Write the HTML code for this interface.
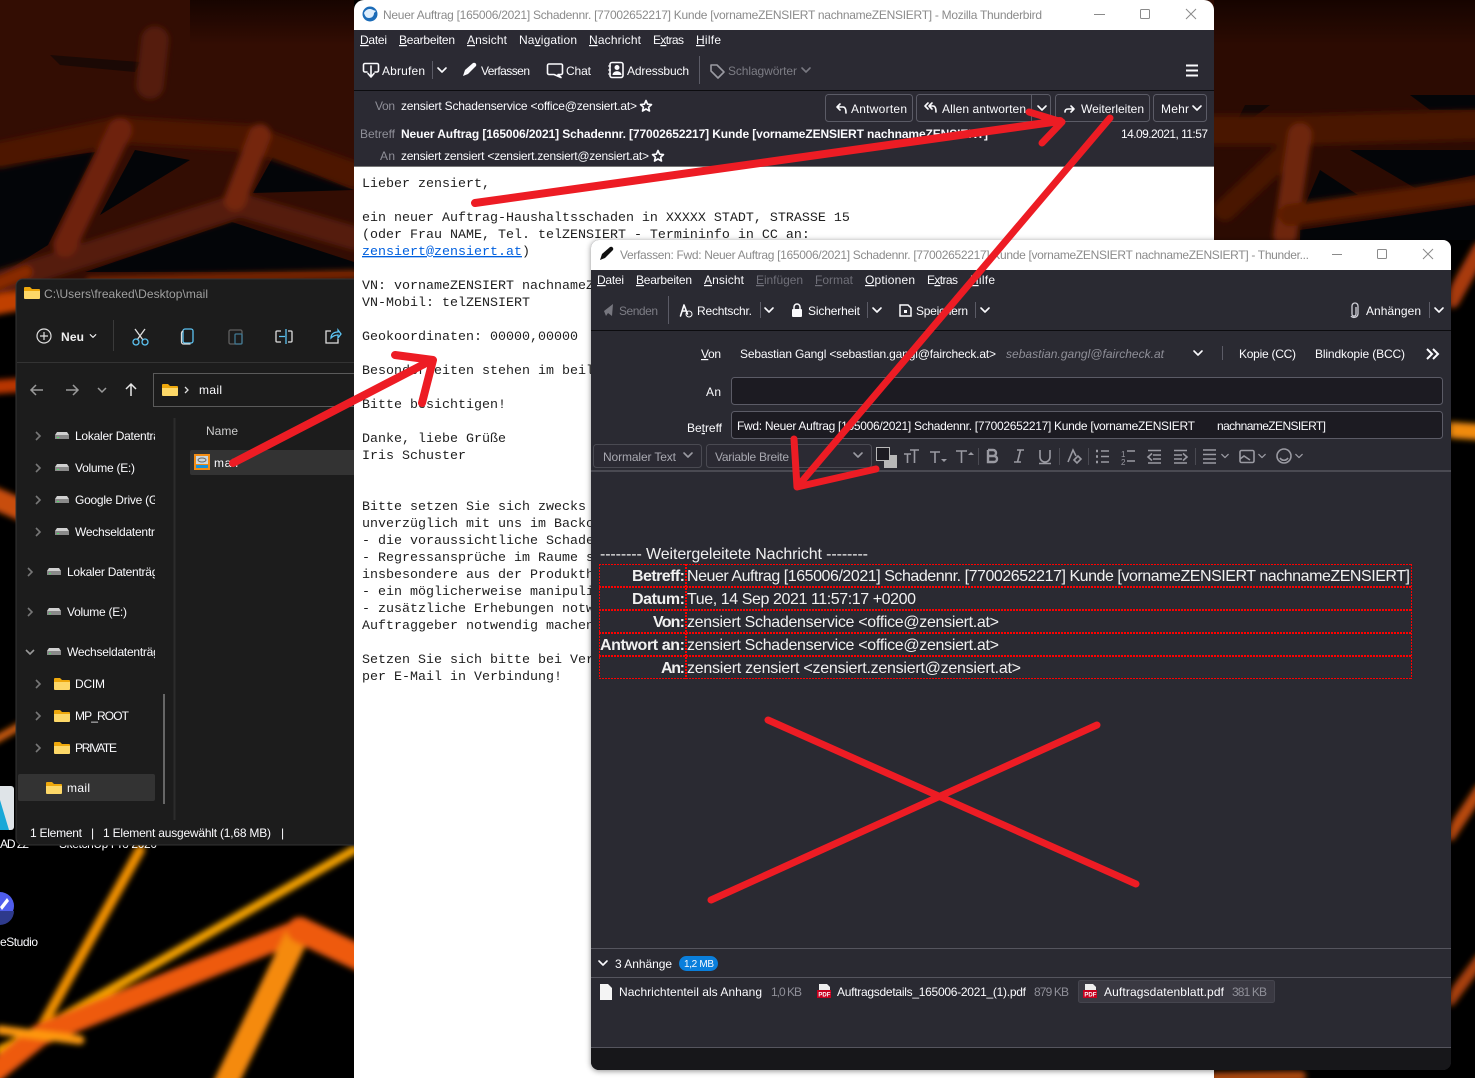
<!DOCTYPE html>
<html lang="de"><head><meta charset="utf-8"><title>Thunderbird</title>
<style>
html,body{margin:0;padding:0;background:#000;width:1475px;height:1078px;overflow:hidden}
svg{display:block}
text{font-family:"Liberation Sans",sans-serif;font-size:12px;fill:#fbfbfe;white-space:pre}
.d{fill:#8f8f98}.t{fill:#8b8b8b}.g{fill:#b0b0b8}
.m{font-family:"Liberation Mono",monospace;font-size:13.33px;fill:#1e1e1e}
.b{font-size:16px}.bb{font-size:16px;font-weight:bold}
.e{fill:#f0f0f0}
.u{text-decoration:underline}
.n{letter-spacing:-.25px}
.s{fill:none;stroke:#fbfbfe;stroke-width:1.6;stroke-linecap:round;stroke-linejoin:round}
.w{fill:none;stroke:#ed1c24;stroke-width:7;stroke-linecap:round;stroke-linejoin:round}
.r{fill:none;stroke:#ff0000;stroke-width:1;stroke-dasharray:2 1}
.q{fill:none;stroke:#9a9aa2;stroke-width:1.6;stroke-linecap:round;stroke-linejoin:round}
.bt{fill:#2b2a33;stroke:#5b5b66;stroke-width:1}
.sp{stroke:#5b5b66;stroke-width:1}
</style></head><body>
<svg xmlns="http://www.w3.org/2000/svg" width="1475" height="1078" viewBox="0 0 1475 1078">
<defs>
<filter id="bl" x="-20%" y="-20%" width="140%" height="140%"><feGaussianBlur stdDeviation="3"/></filter>
<filter id="sh" x="-5%" y="-5%" width="110%" height="110%"><feDropShadow dx="0" dy="1" stdDeviation="3" flood-color="#000" flood-opacity=".45"/></filter>
<linearGradient id="tp" x1="0" y1="0" x2="0" y2="1"><stop offset="0" stop-color="#120300" stop-opacity=".85"/><stop offset="1" stop-color="#120300" stop-opacity="0"/></linearGradient>
<clipPath id="side"><rect x="0" y="410" width="155" height="410"/></clipPath>
<path id="ch" class="s" d="M-4 -2L0 2L4 -2"/>
<path id="cq" class="q" d="M-4 -2L0 2L4 -2"/>
<path id="cr" fill="none" stroke="#777" stroke-width="1.6" d="M-2 -4L2 0L-2 4"/>
<g id="dr"><path d="M2 3H12L14 6V10H0V6Z" fill="#d0d0d0"/><rect y="6" width="14" height="4" fill="#8a8a8a"/><rect x="2" y="8" width="2" height="1" fill="#4cd964"/></g>
<g id="fo"><path d="M0 2a1 1 0 0 1 1-1h5l2 2h7a1 1 0 0 1 1 1v2H0Z" fill="#eea80c"/><path d="M0 5h16v7a1 1 0 0 1-1 1H1a1 1 0 0 1-1-1Z" fill="#fdd868"/></g>
<g id="pdf"><path d="M2 0H10L13 3V14H2Z" fill="#eee"/><rect x="0" y="6" width="14" height="8" fill="#c8001e"/><text x="1.4" y="12.5" style="font-size:6px;font-weight:bold">PDF</text></g>
</defs>

<!-- wallpaper -->
<rect width="1475" height="1078" fill="#000"/>
<rect width="354" height="285" fill="#330d03"/>
<rect x="1200" width="275" height="240" fill="#2c0b02"/>
<g fill="#030508">
<path d="M0 165L95 152L48 245L0 275Z"/>
<path d="M135 150L190 160L100 215Z"/>
<path d="M273 157L354 190L253 193Z"/>
<path d="M232 222L354 262V272H85Z"/>
<path d="M50 55L140 62L135 72L60 65Z" opacity=".5"/>
<path d="M1410 95H1475V110H1430Z"/><path d="M1350 150H1475V175L1415 188Z"/>
<path d="M1320 170L1358 195L1305 205Z"/><path d="M1300 230L1475 205V240H1300Z"/>
<path d="M1245 105L1270 105L1230 135Z" opacity=".6"/>
</g>
<g filter="url(#bl)" fill="none" stroke-linecap="round" stroke-linejoin="round">
<path d="M0 155L120 130L250 138L354 175" stroke="#4d1606" stroke-width="26"/>
<path d="M0 282L240 205L354 238" stroke="#551a07" stroke-width="24"/>
<path d="M155 40L150 85" stroke="#541a07" stroke-width="28"/>
<path d="M120 130L65 245" stroke="#6e2308" stroke-width="24"/>
<path d="M260 135L235 200" stroke="#742608" stroke-width="22"/>
<path d="M90 281L354 274" stroke="#7a2806" stroke-width="8"/>
<path d="M1215 130L1300 130L1475 125" stroke="#4a1705" stroke-width="30"/>
<path d="M1225 210L1300 140" stroke="#4a1705" stroke-width="22"/>
<path d="M1300 135L1285 235" stroke="#6e2508" stroke-width="24"/>
<path d="M1290 215L1475 190" stroke="#5a1c06" stroke-width="22"/>
<path d="M-6 285L26 272" stroke="#8a2c06" stroke-width="12"/>
<path d="M-6 305L22 300" stroke="#c04006" stroke-width="20"/>
<path d="M-6 387L22 385" stroke="#b83406" stroke-width="14"/>
<path d="M-6 498L22 510" stroke="#c84e08" stroke-width="22"/>
<path d="M-5 740L20 726" stroke="#c85a08" stroke-width="8"/>
<path d="M140 850L40 1030" stroke="#f09000" stroke-width="10"/>
<path d="M354 850L40 1030L0 1050" stroke="#f3a000" stroke-width="9"/>
<path d="M300 930L40 1035L-10 1075" stroke="#ee5a0a" stroke-width="22"/>
<path d="M300 930L225 1085" stroke="#f58a0a" stroke-width="24"/>
<path d="M300 930L360 958" stroke="#ee5a0a" stroke-width="26"/>
<path d="M0 1030L80 1040" stroke="#ff9a10" stroke-width="9"/>
<path d="M1480 250L1452 300" stroke="#a83a08" stroke-width="16"/>
<path d="M1450 430L1480 432" stroke="#f08a10" stroke-width="16"/>
<path d="M1480 790L1450 835" stroke="#b8480a" stroke-width="12"/>
<path d="M1450 1000L1480 960" stroke="#a84008" stroke-width="12"/>
<path d="M1215 1078L1300 1076" stroke="#a84608" stroke-width="12"/>
</g>
<rect x="190" width="164" height="45" fill="url(#tp)"/>
<rect x="1214" width="261" height="45" fill="url(#tp)"/>

<!-- desktop icons -->
<rect x="-4" y="786" width="18" height="44" rx="3" fill="#dfe4e8"/><path d="M0 830V800L9 830Z" fill="#18a8d8"/>
<text x="0" y="848" textLength="29">AD 22</text><text x="59" y="848" textLength="98">SketchUp Pro 2020</text>
<circle cx="0" cy="906" r="14" fill="#4f5dec"/><path d="M-14 911H14A14 14 0 0 1 -14 911Z" fill="#2e3a8c"/><path d="M0 907L7 898L9 901L2 910Z" fill="#fff"/>
<text x="0" y="946" textLength="38">eStudio</text>

<!-- explorer -->
<rect x="16" y="279" width="350" height="566" rx="7" fill="#1c1c1c" stroke="#333" stroke-width="1"/>
<use href="#fo" x="24" y="286"/>
<text x="44" y="298" textLength="164" fill="#a0a0a0" style="fill:#a0a0a0">C:\Users\freaked\Desktop\mail</text>
<circle cx="44" cy="336" r="7" fill="none" stroke="#ddd" stroke-width="1.2"/><path d="M44 332V340M40 336H48" stroke="#ddd" stroke-width="1.2"/>
<text x="61" y="341" textLength="23" style="font-weight:bold;fill:#eee">Neu</text>
<use href="#ch" transform="translate(93 336) scale(.7)"/>
<path d="M113.500 320V351" stroke="#3a3a3a"/>
<g fill="none" stroke="#5cc3f2" stroke-width="1.3">
<path d="M135 329L143 340M145 329L137 340" stroke="#ddd"/><circle cx="136" cy="342" r="3"/><circle cx="145" cy="342" r="3"/>
<rect x="183" y="329" width="10" height="14" rx="2"/><path d="M183 331a3 3 0 0 0-1.500 2V342a2 2 0 0 0 2 2h7" stroke="#ddd"/>
<g opacity=".55"><rect x="229" y="330" width="13" height="14" rx="1.500" stroke="#999"/><rect x="235" y="334" width="7" height="10" rx="1"/></g>
<path d="M281 331h-4a1 1 0 0 0-1 1v9a1 1 0 0 0 1 1h4M288 331h3a1 1 0 0 1 1 1v9a1 1 0 0 1-1 1h-3" stroke="#ddd"/><path d="M286 329V344M279 336.500H285"/>
<path d="M331 331h-5v12h12v-4" stroke="#ddd"/><path d="M331 338c0-4 3-6 7-6v-2l3 4-3 4v-3c-3 0-5 1-7 3Z"/>
</g>
<path d="M17 362.500H354" stroke="#333"/>
<g fill="none" stroke="#9a9a9a" stroke-width="1.500"><path d="M43 390H31M36 385L31 390L36 395"/><path d="M66 390H78M73 385L78 390L73 395"/><path d="M98 388L102 392L106 388"/><path d="M131 396V384M126 389L131 384L136 389" stroke="#e8e8e8"/></g>
<rect x="153.500" y="373.500" width="210" height="33" fill="#1c1c1c" stroke="#5a5a5a"/>
<use href="#fo" x="162" y="383"/><path d="M185 387L188 390L185 393" fill="none" stroke="#ddd" stroke-width="1.300"/>
<text x="199" y="394" textLength="23">mail</text>
<path d="M174.500 418V820" stroke="#2c2c2c" stroke-width="2"/>
<text x="206" y="435" textLength="32" style="fill:#ccc">Name</text>
<rect x="190" y="450" width="170" height="25" rx="2" fill="#333"/>
<rect x="194" y="454" width="16" height="16" fill="#f28c14"/><rect x="196" y="456" width="12" height="8" fill="#ccd6dc"/><rect x="196" y="465" width="12" height="3" fill="#1592dc"/><ellipse cx="202" cy="460" rx="4" ry="2" fill="none" stroke="#666"/>
<text x="214" y="467" textLength="24">mail</text>
<g clip-path="url(#side)">
<use href="#cr" x="38" y="436"/><use href="#dr" x="55" y="429"/><text class="n" x="75" y="440">Lokaler Datenträger</text>
<use href="#cr" x="38" y="468"/><use href="#dr" x="55" y="461"/><text x="75" y="472" textLength="60">Volume (E:)</text>
<use href="#cr" x="38" y="500"/><use href="#dr" x="55" y="493"/><text class="n" x="75" y="504">Google Drive (G:)</text>
<use href="#cr" x="38" y="532"/><use href="#dr" x="55" y="525"/><text class="n" x="75" y="536">Wechseldatenträger</text>
<use href="#cr" x="30" y="572"/><use href="#dr" x="47" y="565"/><text class="n" x="67" y="576">Lokaler Datenträger</text>
<use href="#cr" x="30" y="612"/><use href="#dr" x="47" y="605"/><text x="67" y="616" textLength="60">Volume (E:)</text>
<path d="M26 650L30 654L34 650" fill="none" stroke="#999" stroke-width="1.600"/><use href="#dr" x="47" y="645"/><text class="n" x="67" y="656">Wechseldatenträger</text>
<use href="#cr" x="38" y="684"/><use href="#fo" x="54" y="677"/><text x="75" y="688" textLength="30">DCIM</text>
<use href="#cr" x="38" y="716"/><use href="#fo" x="54" y="709"/><text x="75" y="720" textLength="54">MP_ROOT</text>
<use href="#cr" x="38" y="748"/><use href="#fo" x="54" y="741"/><text x="75" y="752" textLength="42">PRIVATE</text>
<rect x="18" y="774" width="137" height="27" rx="2" fill="#333"/>
<use href="#fo" x="46" y="781"/><text x="67" y="792" textLength="23">mail</text>
</g>
<rect x="163" y="694" width="2" height="110" fill="#666"/>
<text x="30" y="837" textLength="52">1 Element</text><text x="91" y="837">|</text><text x="103" y="837" textLength="168">1 Element ausgewählt (1,68 MB)</text><text x="281" y="837">|</text>

<!-- thunderbird main -->
<path d="M354 10a10 10 0 0 1 10-10H1204a10 10 0 0 1 10 10V1078H354Z" fill="#fff"/>
<circle cx="370" cy="14" r="7.500" fill="#1c6cb8"/><path d="M364 13c2-4 6-5 9-3l3 1-2 2c0 3-2 5-5 5-3 0-4-2-5-5Z" fill="#dfeefc"/>
<text class="t" x="383" y="19" textLength="659">Neuer Auftrag [165006/2021] Schadennr. [77002652217] Kunde [vornameZENSIERT nachnameZENSIERT] - Mozilla Thunderbird</text>
<path d="M1094 14.500H1105" stroke="#8a8a8a"/><rect x="1140.500" y="9.500" width="9" height="9" rx="1" fill="none" stroke="#8a8a8a"/><path d="M1186 9L1196 19M1196 9L1186 19" stroke="#8a8a8a"/>
<rect x="354" y="30" width="860" height="136" fill="#2b2a33"/>
<rect x="354" y="166" width="860" height="1" fill="#777"/>
<path d="M354 90.500H1214" stroke="#0c0c0f"/>
<text x="360" y="44" textLength="27"><tspan class="u">D</tspan>atei</text>
<text x="399" y="44" textLength="56"><tspan class="u">B</tspan>earbeiten</text>
<text x="467" y="44" textLength="40"><tspan class="u">A</tspan>nsicht</text>
<text x="519" y="44" textLength="58">Na<tspan class="u">v</tspan>igation</text>
<text x="589" y="44" textLength="52"><tspan class="u">N</tspan>achricht</text>
<text x="653" y="44" textLength="31">E<tspan class="u">x</tspan>tras</text>
<text x="696" y="44" textLength="25"><tspan class="u">H</tspan>ilfe</text>
<!-- toolbar -->
<path class="s" d="M367 72H365a1.500 1.500 0 0 1-1.500-1.500V65a1.500 1.500 0 0 1 1.500-1.500H377a1.500 1.500 0 0 1 1.500 1.500v5.500A1.500 1.500 0 0 1 377 72H375M371 66V76M368 73.500L371 77L374 73.500"/>
<text x="382" y="75" textLength="43">Abrufen</text>
<path class="sp" d="M432.500 61V79"/><use href="#ch" x="442" y="70"/>
<path d="M463 76L465 70L473 63C475 62 477 64 476 66L468 74Z" fill="#fbfbfe"/>
<text x="481" y="75" textLength="49">Verfassen</text>
<path class="s" d="M549 64H561a1.500 1.500 0 0 1 1.500 1.500V73a1.500 1.500 0 0 1-1.500 1.500H558L561 77.500 554 74.500H549A1.500 1.500 0 0 1 547.500 73V65.500A1.500 1.500 0 0 1 549 64Z"/>
<text x="566" y="75" textLength="25">Chat</text>
<rect x="610" y="62.500" width="13" height="15" rx="2" fill="none" stroke="#fbfbfe" stroke-width="1.600"/><circle cx="617" cy="67.500" r="2.500" fill="#fbfbfe"/><path d="M612.500 75c0-5 9-5 9 0Z" fill="#fbfbfe"/><path d="M608 66H611M608 70H611M608 74H611" stroke="#fbfbfe"/>
<text x="627" y="75" textLength="62">Adressbuch</text>
<path class="sp" d="M699.500 56V84"/>
<path class="q" d="M711 65V71L718 78L724 72L717 65Z" stroke="#77777f"/>
<text class="d" x="728" y="75" textLength="69" style="fill:#7d7d85">Schlagwörter</text>
<use href="#cq" x="806" y="70" style="opacity:.7"/>
<path d="M1186 65.500H1198M1186 70.500H1198M1186 75.500H1198" stroke="#fbfbfe" stroke-width="2"/>
<!-- header rows -->
<text class="d" x="375" y="110" textLength="20">Von</text>
<text x="401" y="110" textLength="236">zensiert Schadenservice &lt;office@zensiert.at&gt;</text>
<path class="s" d="M646 100.500L647.600 104.200 651.500 104.600 648.600 107.200 649.500 111 646 109 642.500 111 643.400 107.200 640.500 104.600 644.400 104.200Z" stroke-width="1.300"/>
<text class="d" x="360" y="138" textLength="35">Betreff</text>
<text x="401" y="138" textLength="587" style="font-weight:bold">Neuer Auftrag [165006/2021] Schadennr. [77002652217] Kunde [vornameZENSIERT nachnameZENSIERT]</text>
<text class="d" x="380" y="160" textLength="15">An</text>
<text x="401" y="160" textLength="248">zensiert zensiert &lt;zensiert.zensiert@zensiert.at&gt;</text>
<path class="s" d="M658 150.500L659.600 154.200 663.500 154.600 660.600 157.200 661.500 161 658 159 654.500 161 655.400 157.200 652.500 154.600 656.400 154.200Z" stroke-width="1.300"/>
<text x="1121" y="138" textLength="87">14.09.2021, 11:57</text>
<rect class="bt" x="825.500" y="94.500" width="87" height="27" rx="3"/>
<rect class="bt" x="916.500" y="94.500" width="134" height="27" rx="3"/>
<path class="sp" d="M1031.500 95V121"/>
<rect class="bt" x="1055.500" y="94.500" width="94" height="27" rx="3"/>
<rect class="bt" x="1153.500" y="94.500" width="53" height="27" rx="3"/>
<path class="s" d="M840 104L837 107L840 110M837 107H843C845 107 846 109 846 113"/>
<text x="851" y="113" textLength="56">Antworten</text>
<path class="s" d="M928 103L925 106L928 109M932 103L929 106L932 109M929 106H933C935 106 936 108 936 112"/>
<text x="942" y="113" textLength="84">Allen antworten</text>
<use href="#ch" x="1042" y="108"/>
<path class="s" d="M1071 106L1074 109L1071 112M1074 109H1068C1066 109 1065 110 1065 112"/>
<text x="1081" y="113" textLength="63">Weiterleiten</text>
<text x="1161" y="113" textLength="28">Mehr</text>
<use href="#ch" x="1197" y="108"/>
<!-- message -->
<text class="m" x="362" y="187">Lieber zensiert,</text>
<text class="m" x="362" y="221">ein neuer Auftrag-Haushaltsschaden in XXXXX STADT, STRASSE 15</text>
<text class="m" x="362" y="238">(oder Frau NAME, Tel. telZENSIERT - Termininfo in CC an:</text>
<text class="m" x="362" y="255"><tspan class="u" style="fill:#0060df">zensiert@zensiert.at</tspan>)</text>
<text class="m" x="362" y="289">VN: vornameZENSIERT nachnameZENSIERT</text>
<text class="m" x="362" y="306">VN-Mobil: telZENSIERT</text>
<text class="m" x="362" y="340">Geokoordinaten: 00000,00000</text>
<text class="m" x="362" y="374">Besonderheiten stehen im beiliegenden</text>
<text class="m" x="362" y="408">Bitte besichtigen!</text>
<text class="m" x="362" y="442">Danke, liebe Grüße</text>
<text class="m" x="362" y="459">Iris Schuster</text>
<text class="m" x="362" y="510">Bitte setzen Sie sich zwecks</text>
<text class="m" x="362" y="527">unverzüglich mit uns im Backoffice</text>
<text class="m" x="362" y="544">- die voraussichtliche Schadenhöhe</text>
<text class="m" x="362" y="561">- Regressansprüche im Raume stehen</text>
<text class="m" x="362" y="578">insbesondere aus der Produkthaftung</text>
<text class="m" x="362" y="595">- ein möglicherweise manipuliert</text>
<text class="m" x="362" y="612">- zusätzliche Erhebungen notwendig</text>
<text class="m" x="362" y="629">Auftraggeber notwendig machen</text>
<text class="m" x="362" y="663">Setzen Sie sich bitte bei Verdacht</text>
<text class="m" x="362" y="680">per E-Mail in Verbindung!</text>

<!-- compose -->
<g filter="url(#sh)">
<path d="M591 248a8 8 0 0 1 8-8H1443a8 8 0 0 1 8 8V1062a8 8 0 0 1-8 8H599a8 8 0 0 1-8-8Z" fill="#2b2a33"/>
</g>
<path d="M591 248a8 8 0 0 1 8-8H1443a8 8 0 0 1 8 8V270H591Z" fill="#fff"/>
<path d="M600 260L602 254L610 247C612 246 614 248 613 250L605 258Z" fill="#111"/>
<text class="t" x="620" y="259" textLength="689">Verfassen: Fwd: Neuer Auftrag [165006/2021] Schadennr. [77002652217] Kunde [vornameZENSIERT nachnameZENSIERT] - Thunder...</text>
<path d="M1332 254.500H1342" stroke="#8a8a8a"/><rect x="1377.500" y="249.500" width="9" height="9" rx="1" fill="none" stroke="#8a8a8a"/><path d="M1423 249L1433 259M1433 249L1423 259" stroke="#8a8a8a"/>
<text x="597" y="284" textLength="27"><tspan class="u">D</tspan>atei</text>
<text x="636" y="284" textLength="56"><tspan class="u">B</tspan>earbeiten</text>
<text x="704" y="284" textLength="40"><tspan class="u">A</tspan>nsicht</text>
<text class="d" x="756" y="284" textLength="47" style="fill:#6f6f78"><tspan class="u">E</tspan>infügen</text>
<text class="d" x="815" y="284" textLength="38" style="fill:#6f6f78"><tspan class="u">F</tspan>ormat</text>
<text x="865" y="284" textLength="50"><tspan class="u">O</tspan>ptionen</text>
<text x="927" y="284" textLength="31">E<tspan class="u">x</tspan>tras</text>
<text x="970" y="284" textLength="25"><tspan class="u">H</tspan>ilfe</text>
<path d="M604 311L613 304L612 316L608 313L606 316Z" fill="#77777f"/>
<text x="619" y="315" textLength="39" style="fill:#7d7d85">Senden</text>
<path class="sp" d="M668.500 296V324"/>
<path class="s" d="M680.500 316L684 305L687.500 314M682 311H686" stroke-width="1.400"/><circle cx="689" cy="314" r="3" fill="none" stroke="#fbfbfe"/>
<text x="697" y="315" textLength="55">Rechtschr.</text>
<path class="sp" d="M760.500 302V318"/><use href="#ch" x="769" y="310"/>
<rect x="792" y="309" width="10" height="8" rx="1" fill="#fbfbfe"/><path d="M794 309V307a3 3 0 0 1 6 0V309" fill="none" stroke="#fbfbfe" stroke-width="1.500"/>
<text x="808" y="315" textLength="52">Sicherheit</text>
<path class="sp" d="M867.500 302V318"/><use href="#ch" x="877" y="310"/>
<path d="M900 305H908L911 308V316H900Z" fill="none" stroke="#fbfbfe" stroke-width="1.500"/><rect x="904" y="310" width="3" height="3" fill="#fbfbfe"/>
<text x="916" y="315" textLength="52">Speichern</text>
<path class="sp" d="M975.500 302V318"/><use href="#ch" x="985" y="310"/>
<path fill="none" stroke="#d0d0d8" stroke-width="1.300" d="M1356 307V314a2 2 0 0 1-4 0V306a3 3 0 0 1 6 0V314a4 4 0 0 1-7 2"/>
<text x="1366" y="315" textLength="55">Anhängen</text>
<path class="sp" d="M1429.500 302V318"/><use href="#ch" x="1439" y="310"/>
<path d="M591 330.500H1451" stroke="#0c0c0f"/>
<text x="701" y="358" textLength="20"><tspan class="u">V</tspan>on</text>
<text x="740" y="358" textLength="256">Sebastian Gangl &lt;sebastian.gangl@faircheck.at&gt;</text>
<text x="1006" y="358" textLength="158" style="font-style:italic;fill:#8f8f98">sebastian.gangl@faircheck.at</text>
<use href="#ch" x="1198" y="353"/>
<path class="sp" d="M1222.500 346V360"/>
<text x="1239" y="358" textLength="57">Kopie (CC)</text>
<text x="1315" y="358" textLength="90">Blindkopie (BCC)</text>
<path d="M1427 349L1432 354L1427 359M1433 349L1438 354L1433 359" fill="none" stroke="#fbfbfe" stroke-width="2"/>
<text x="706" y="396" textLength="15">An</text>
<rect x="731.500" y="377.500" width="711" height="27" rx="3" fill="#1c1b22" stroke="#5b5b66"/>
<text x="687" y="432" textLength="35">Be<tspan class="u">t</tspan>reff</text>
<rect x="731.500" y="411.500" width="711" height="27" rx="3" fill="#1c1b22" stroke="#5b5b66"/>
<text x="737" y="430" textLength="458">Fwd: Neuer Auftrag [165006/2021] Schadennr. [77002652217] Kunde [vornameZENSIERT</text>
<text x="1217" y="430" textLength="109">nachnameZENSIERT]</text>
<!-- format toolbar -->
<rect class="bt" x="593.500" y="444.500" width="108" height="23" rx="3" style="stroke:#4a4a52"/>
<text x="603" y="461" textLength="73" class="g" style="fill:#a8a8b0">Normaler Text</text><use href="#cq" x="688" y="455"/>
<rect class="bt" x="706.500" y="444.500" width="165" height="23" rx="3" style="stroke:#4a4a52"/>
<text x="715" y="461" textLength="74" style="fill:#a8a8b0">Variable Breite</text><use href="#cq" x="858" y="455"/>
<rect x="884" y="455" width="13" height="13" fill="#b8b8b8"/><rect x="876.500" y="447.500" width="13" height="13" fill="#1c1b22" stroke="#b8b8b8"/>
<g fill="none" stroke="#9a9aa2" stroke-width="1.600">
<path d="M904 454H911M907.500 454V463M910 450H919M914.500 450V463"/>
<path d="M930 452H940M935 452V463"/><path d="M941 459H947L944 462Z" fill="#9a9aa2" stroke="none"/>
<path d="M956 451H967M961.500 451V463"/><path d="M968 455H974L971 452Z" fill="#9a9aa2" stroke="none"/>
<path d="M978.500 448V465" stroke="#4a4a52" stroke-width="1"/>
<path d="M988 450V462H994a3 3 0 0 0 0-6H988M988 456H993a3 3 0 0 0 0-6H988" stroke-width="2.400"/>
<path d="M1017 450H1024M1014 462H1021M1020.500 450L1017.500 462"/>
<path d="M1040 450V457a5 5 0 0 0 10 0V450M1039 463.500H1051"/>
<path d="M1059.500 448V465" stroke="#4a4a52" stroke-width="1"/>
<path d="M1068 462L1073 450L1076 456"/><path d="M1074 460L1078 456L1081 459L1077 463Z"/>
<path d="M1088.500 448V465" stroke="#4a4a52" stroke-width="1"/>
<path d="M1101 451H1109M1101 456.500H1109M1101 462H1109"/><path d="M1096 451H1098M1096 456.500H1098M1096 462H1098" stroke-width="2.400"/>
<path d="M1127 451H1135M1127 461H1135"/>
<path d="M1148 450.500H1161M1153 455H1161M1153 459H1161M1148 463H1161M1152 453.500L1148 457L1152 460.500"/>
<path d="M1174 450.500H1187M1174 455H1182M1174 459H1182M1174 463H1187M1183 453.500L1187 457L1183 460.500"/>
<path d="M1195.500 448V465" stroke="#4a4a52" stroke-width="1"/>
<path d="M1203 450H1216M1203 454.500H1216M1203 459H1216M1203 463H1216"/>
<rect x="1240" y="450.500" width="14" height="12" rx="1.500"/><path d="M1240 459L1244 456L1250 460"/>
<circle cx="1284" cy="456" r="7"/><path d="M1280 458c2 3 6 3 8 0"/>
</g>
<text x="1121" y="457" style="font-size:8px;fill:#9a9aa2">1</text><text x="1121" y="465" style="font-size:8px;fill:#9a9aa2">2</text>
<use href="#cq" transform="translate(1225 456) scale(.8)"/><use href="#cq" transform="translate(1262 456) scale(.8)"/><use href="#cq" transform="translate(1299 456) scale(.8)"/>
<rect x="591" y="470" width="860" height="2" fill="#4a4a52"/>
<!-- body -->
<text class="b e" x="600" y="559" textLength="268">-------- Weitergeleitete Nachricht --------</text>
<path class="r" d="M599 564.500H1412M599 678.500H1412"/>
<path class="r" d="M599.500 564V679M1411.500 564V679"/>
<path class="r" d="M599 587H1412M599 610H1412M599 633H1412M599 656H1412" style="stroke-width:2"/>
<path class="r" d="M686 564V679" style="stroke-width:2"/>
<text class="bb e" x="632" y="581" textLength="53">Betreff:</text>
<text class="bb e" x="632" y="604" textLength="53">Datum:</text>
<text class="bb e" x="653" y="627" textLength="32">Von:</text>
<text class="bb e" x="600" y="650" textLength="85">Antwort an:</text>
<text class="bb e" x="661" y="673" textLength="24">An:</text>
<text class="b e" x="687" y="581" textLength="723">Neuer Auftrag [165006/2021] Schadennr. [77002652217] Kunde [vornameZENSIERT nachnameZENSIERT]</text>
<text class="b e" x="687" y="604" textLength="229">Tue, 14 Sep 2021 11:57:17 +0200</text>
<text class="b e" x="687" y="627" textLength="312">zensiert Schadenservice &lt;office@zensiert.at&gt;</text>
<text class="b e" x="687" y="650" textLength="312">zensiert Schadenservice &lt;office@zensiert.at&gt;</text>
<text class="b e" x="687" y="673" textLength="334">zensiert zensiert &lt;zensiert.zensiert@zensiert.at&gt;</text>
<!-- attachments -->
<path d="M591 948.500H1451M591 977.500H1451M591 1047.500H1451" stroke="#55555e"/>
<path d="M591 1048H1451V1062a8 8 0 0 1-8 8H599a8 8 0 0 1-8-8Z" fill="#17171a"/>
<use href="#ch" x="603" y="963"/>
<text x="615" y="968" textLength="57">3 Anhänge</text>
<rect x="679" y="956" width="39" height="15" rx="7.500" fill="#0a7fdc"/>
<text x="684" y="967" textLength="30" style="font-size:10px">1,2 MB</text>
<path d="M600 984H608L612 988V1000H600Z" fill="#f4f4f4"/>
<text x="619" y="996" textLength="143">Nachrichtenteil als Anhang</text>
<text class="d" x="771" y="996" textLength="31">1,0 KB</text>
<use href="#pdf" x="817" y="984"/>
<text x="837" y="996" textLength="189">Auftragsdetails_165006-2021_(1).pdf</text>
<text class="d" x="1034" y="996" textLength="35">879 KB</text>
<rect x="1078.500" y="980.500" width="196" height="22" rx="2" fill="#3a3942" stroke="#45454e"/>
<use href="#pdf" x="1083" y="984"/>
<text x="1104" y="996" textLength="120">Auftragsdatenblatt.pdf</text>
<text class="d" x="1232" y="996" textLength="35">381 KB</text>

<!-- red annotations -->
<path class="w" d="M475 203L1060 121" style="stroke-width:8"/><path class="w" d="M1029 112L1062 122L1042 143"/>
<path class="w" d="M233 463L432 360" style="stroke-width:8"/><path class="w" d="M395 355L433 360L422 403" style="stroke-width:8"/>
<path class="w" d="M1110 118L798 486"/><path class="w" d="M794 439L797 487L876 469"/>
<path class="w" d="M768 720L1136 884"/><path class="w" d="M1097 725L711 900"/>
</svg>
</body></html>
